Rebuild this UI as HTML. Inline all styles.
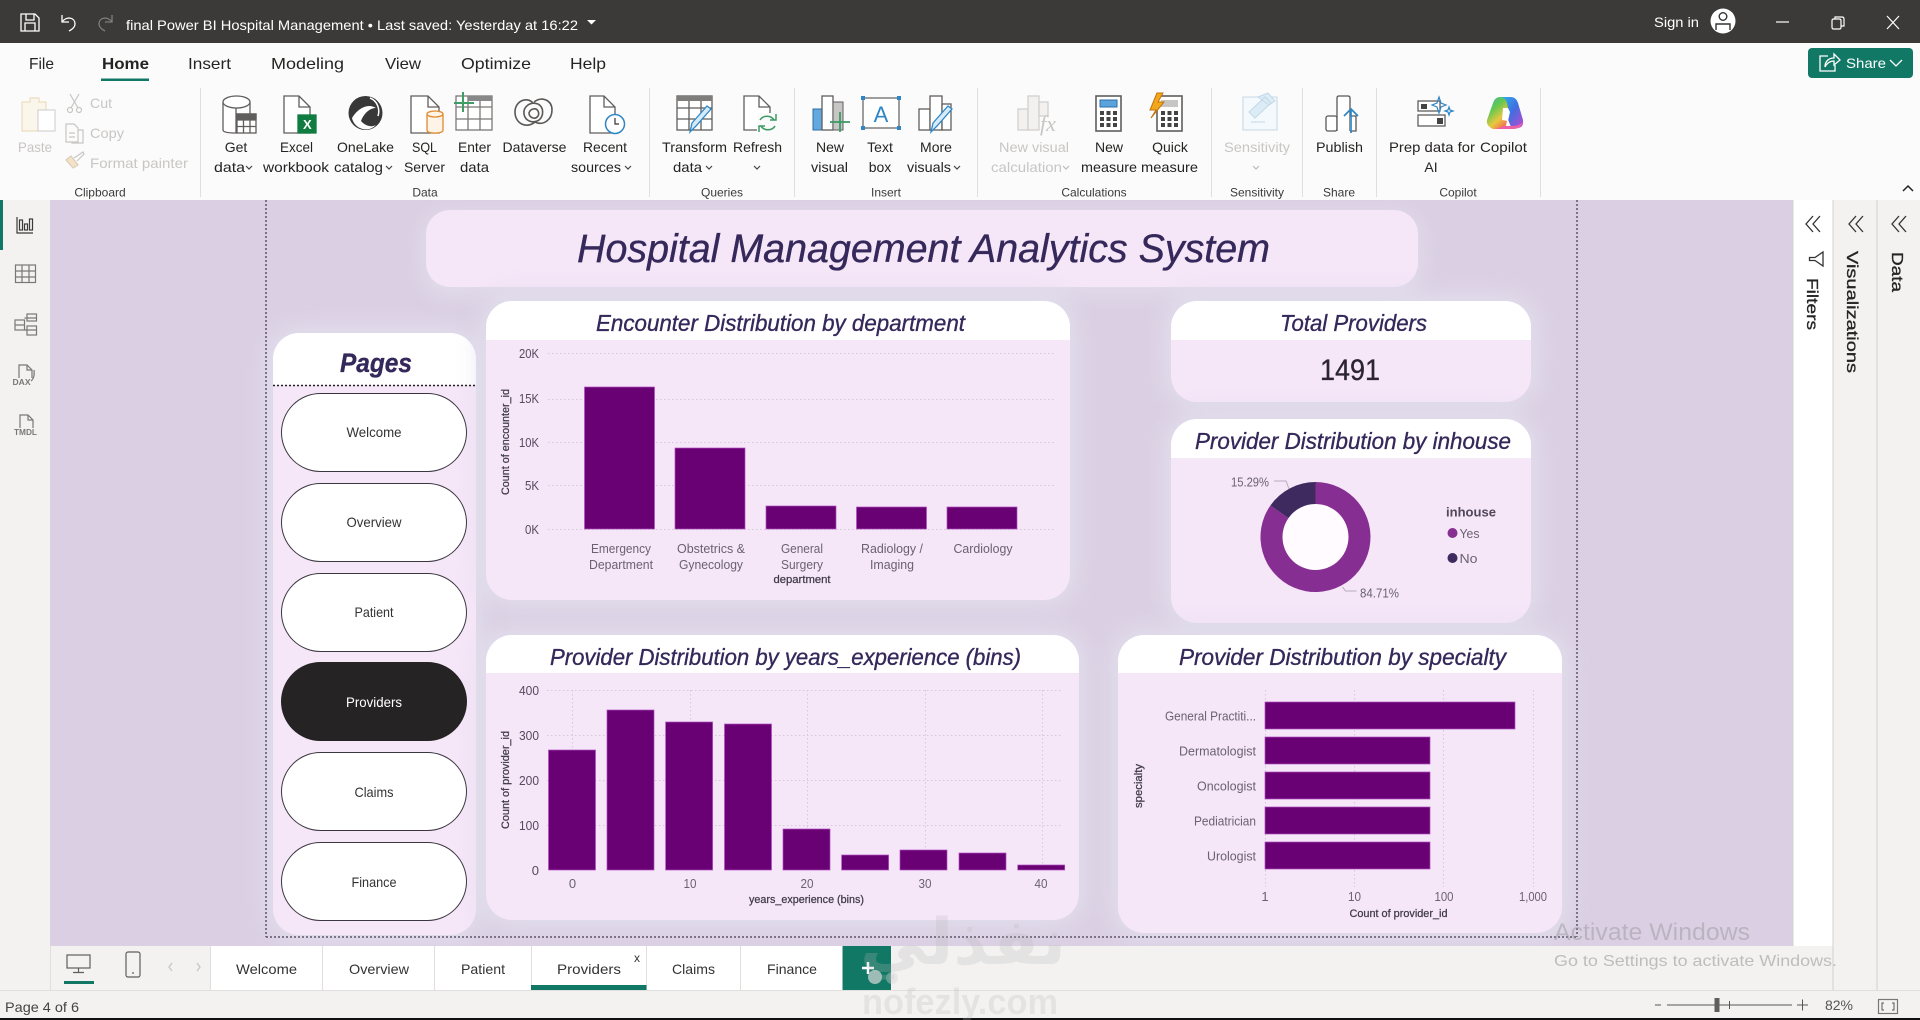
<!DOCTYPE html>
<html lang="en"><head><meta charset="utf-8"><title>final Power BI Hospital Management</title>
<style>
html,body{margin:0;padding:0;width:1920px;height:1020px;overflow:hidden;background:#f3f2f1;font-family:"Liberation Sans",sans-serif}
.abs{position:absolute}
.card{position:absolute;background:#f5e6f8;border-radius:26px;box-shadow:0 0 22px 8px rgba(226,224,238,.8);overflow:hidden}
.card i{display:block;background:#fff;position:absolute;left:0;right:0;top:0}
.pill{position:absolute;left:281px;width:186px;height:79px;border:1px solid #3b3740;border-radius:39.5px;background:#fff;box-sizing:border-box}
text{font-family:"Liberation Sans",sans-serif}
</style></head><body>
<div class="abs" style="left:50px;top:200px;width:1743px;height:746px;background:#dbd0e3"></div>
<div class="abs" style="left:426px;top:210px;width:992px;height:77px;background:#f5e6f8;border-radius:24px;box-shadow:0 6px 18px 6px rgba(226,222,236,.75)"></div>
<div class="card" style="left:273px;top:333px;width:203px;height:602px"><i style="height:52px"></i></div>
<div class="card" style="left:486px;top:301px;width:584px;height:299px"><i style="height:39px"></i></div>
<div class="card" style="left:1171px;top:301px;width:360px;height:101px"><i style="height:39px"></i></div>
<div class="card" style="left:1171px;top:419px;width:360px;height:204px"><i style="height:39px"></i></div>
<div class="card" style="left:486px;top:635px;width:593px;height:285px"><i style="height:38px"></i></div>
<div class="card" style="left:1118px;top:635px;width:444px;height:298px"><i style="height:38px"></i></div>
<div class="pill" style="top:393px"></div><div class="pill" style="top:483px"></div><div class="pill" style="top:573px"></div>
<div class="pill" style="top:662px;background:#252323;border-color:#252323"></div><div class="pill" style="top:752px"></div><div class="pill" style="top:842px"></div>

<svg class="abs" style="left:0;top:0" width="1920" height="1020" viewBox="0 0 1920 1020" xmlns="http://www.w3.org/2000/svg">
<defs>
<linearGradient id="cp1" x1="0" y1="0" x2="1" y2="1"><stop offset="0" stop-color="#2fb4ec"/><stop offset=".5" stop-color="#3f6fe0"/><stop offset="1" stop-color="#c048d0"/></linearGradient>
<linearGradient id="cp2" x1="0" y1="0" x2=".6" y2="1"><stop offset="0" stop-color="#3fb6a8"/><stop offset=".4" stop-color="#62c850"/><stop offset=".75" stop-color="#e8c840"/><stop offset="1" stop-color="#f07a4a"/></linearGradient>
</defs>

<!-- title bar -->
<rect width="1920" height="43" fill="#3b3a39"/>
<g fill="none" stroke="#fff" stroke-width="1.3">
<path d="M21 14h14l4 4v13H21z"/><path d="M26 14v6h8v-6"/><path d="M25 31v-8h10v8"/>
<path d="M62 15v7h7"/><path d="M62 22c4-6 13-5 13 2 0 3-2 5-6 7"/>
<path stroke="#7f7e7d" d="M112 15v7h-7"/><path stroke="#7f7e7d" d="M112 22c-4-6-13-5-13 2 0 3 2 5 6 7"/>
</g>
<text x="126" y="30" font-size="14" fill="#fff" textLength="452" lengthAdjust="spacingAndGlyphs">final Power BI Hospital Management  •  Last saved: Yesterday at 16:22</text>
<path d="M587 20h9l-4.500 4.500z" fill="#fff"/>
<text x="1654" y="27" font-size="14" fill="#fff" textLength="45" lengthAdjust="spacingAndGlyphs">Sign in</text>
<circle cx="1723" cy="21" r="12.500" fill="#fff"/><circle cx="1723" cy="16.500" r="3.800" fill="none" stroke="#333" stroke-width="1.400"/><path d="M1716 30v-6h14v6" fill="none" stroke="#333" stroke-width="1.400"/>
<path d="M1776 22h13" stroke="#fff" stroke-width="1.200"/>
<g fill="none" stroke="#fff" stroke-width="1.200"><rect x="1832" y="19" width="9" height="10" rx="1.500"/><path d="M1835 19v-2h7q2 0 2 2v7h-3"/><path d="M1887 16l12 13M1899 16l-12 13"/></g>

<!-- ribbon -->
<rect y="43" width="1920" height="157" fill="#fbfbfb"/>
<g font-size="16" fill="#252423">
<text x="29" y="69" textLength="25" lengthAdjust="spacingAndGlyphs">File</text>
<text x="102" y="69" font-weight="700" textLength="47" lengthAdjust="spacingAndGlyphs">Home</text>
<text x="188" y="69" textLength="43" lengthAdjust="spacingAndGlyphs">Insert</text>
<text x="271" y="69" textLength="73" lengthAdjust="spacingAndGlyphs">Modeling</text>
<text x="385" y="69" textLength="36" lengthAdjust="spacingAndGlyphs">View</text>
<text x="461" y="69" textLength="70" lengthAdjust="spacingAndGlyphs">Optimize</text>
<text x="570" y="69" textLength="36" lengthAdjust="spacingAndGlyphs">Help</text>
</g>
<rect x="101" y="78.500" width="48" height="2.500" fill="#117865"/>
<rect x="1808" y="48" width="105" height="30" rx="4" fill="#117865"/>
<g fill="none" stroke="#fff" stroke-width="1.300"><path d="M1828 56h-8v15h15v-6"/><path d="M1825 67c0-6 4-9 9-9v-4l6 6-6 5v-4c-4 0-7 2-9 6z"/><path d="M1890 60l6 6 6-6"/></g>
<text x="1846" y="68" font-size="14" fill="#fff" textLength="40" lengthAdjust="spacingAndGlyphs">Share</text>
<g stroke="#e1dfdd"><path d="M200.500 88v109M649.500 88v109M794.500 88v109M977.500 88v109M1211.500 88v109M1302.500 88v109M1376.500 88v109M1540.500 88v109"/></g>

<!-- ribbon labels -->
<g font-size="14" fill="#252423">
<text x="236" y="152" text-anchor="middle">Get</text><text x="214" y="172" textLength="31" lengthAdjust="spacingAndGlyphs">data</text>
<text x="280" y="152" textLength="33" lengthAdjust="spacingAndGlyphs">Excel</text><text x="263" y="172" textLength="66" lengthAdjust="spacingAndGlyphs">workbook</text>
<text x="337" y="152" textLength="57" lengthAdjust="spacingAndGlyphs">OneLake</text><text x="334" y="172" textLength="49" lengthAdjust="spacingAndGlyphs">catalog</text>
<text x="412" y="152" textLength="25" lengthAdjust="spacingAndGlyphs">SQL</text><text x="404" y="172" textLength="41" lengthAdjust="spacingAndGlyphs">Server</text>
<text x="458" y="152" textLength="33" lengthAdjust="spacingAndGlyphs">Enter</text><text x="460" y="172" textLength="29" lengthAdjust="spacingAndGlyphs">data</text>
<text x="502.500" y="152" textLength="64" lengthAdjust="spacingAndGlyphs">Dataverse</text>
<text x="583" y="152" textLength="44" lengthAdjust="spacingAndGlyphs">Recent</text><text x="571" y="172" textLength="50" lengthAdjust="spacingAndGlyphs">sources</text>
<text x="662" y="152" textLength="65" lengthAdjust="spacingAndGlyphs">Transform</text><text x="673" y="172" textLength="29" lengthAdjust="spacingAndGlyphs">data</text>
<text x="733" y="152" textLength="49" lengthAdjust="spacingAndGlyphs">Refresh</text>
<text x="830" y="152" text-anchor="middle">New</text><text x="811" y="172" textLength="37" lengthAdjust="spacingAndGlyphs">visual</text>
<text x="880" y="152" text-anchor="middle">Text</text><text x="880" y="172" text-anchor="middle">box</text>
<text x="936" y="152" text-anchor="middle">More</text><text x="907" y="172" textLength="44" lengthAdjust="spacingAndGlyphs">visuals</text>
<text x="1109" y="152" text-anchor="middle">New</text><text x="1081" y="172" textLength="56" lengthAdjust="spacingAndGlyphs">measure</text>
<text x="1170" y="152" text-anchor="middle">Quick</text><text x="1141" y="172" textLength="57" lengthAdjust="spacingAndGlyphs">measure</text>
<text x="1316" y="152" textLength="47" lengthAdjust="spacingAndGlyphs">Publish</text>
<text x="1389" y="152" textLength="86" lengthAdjust="spacingAndGlyphs">Prep data for</text><text x="1431" y="172" text-anchor="middle">AI</text>
<text x="1480" y="152" textLength="47" lengthAdjust="spacingAndGlyphs">Copilot</text>
</g>
<g font-size="14" fill="#c8c6c4">
<text x="18" y="152" textLength="34" lengthAdjust="spacingAndGlyphs">Paste</text>
<text x="90" y="108" textLength="22" lengthAdjust="spacingAndGlyphs">Cut</text>
<text x="90" y="138" textLength="34" lengthAdjust="spacingAndGlyphs">Copy</text>
<text x="90" y="168" textLength="98" lengthAdjust="spacingAndGlyphs">Format painter</text>
<text x="999" y="152" textLength="70" lengthAdjust="spacingAndGlyphs">New visual</text>
<text x="991" y="172" textLength="71" lengthAdjust="spacingAndGlyphs">calculation</text>
<text x="1224" y="152" textLength="66" lengthAdjust="spacingAndGlyphs">Sensitivity</text>
</g>
<g font-size="12" fill="#3b3a39" text-anchor="middle">
<text x="100" y="196.500">Clipboard</text><text x="425" y="196.500">Data</text><text x="722" y="196.500">Queries</text><text x="886" y="196.500">Insert</text><text x="1094" y="196.500">Calculations</text><text x="1257" y="196.500">Sensitivity</text><text x="1339" y="196.500">Share</text><text x="1458" y="196.500">Copilot</text>
</g>
<g fill="none" stroke="#444" stroke-width="1.200">
<path d="M246 166l3 3 3-3M386 166l3 3 3-3M625 166l3 3 3-3M706 166l3 3 3-3M754 166l3 3 3-3M954 166l3 3 3-3"/>
<path stroke="#bbb" d="M1063 166l3 3 3-3M1253 166l3 3 3-3"/>
<path stroke="#222" d="M1903 191l5-5 5 5" stroke-width="1.500"/>
</g>

<!-- ribbon icons -->
<g fill="none" stroke-width="1.200">
<path d="M22 102h8v-4h9v4h7v8h-8v21H22z" stroke="#eddcc0" fill="#fbf6ec"/>
<rect x="38" y="110" width="17" height="21" stroke="#d5d3d1" fill="#fff"/>
<g stroke="#c8c6c4"><path d="M70 94l8 14M79 94l-8 14"/><circle cx="70" cy="110" r="2.500"/><circle cx="79" cy="110" r="2.500"/>
<path d="M66 124h8l4 4v14H66z"/><path d="M78 130h5v13H72v-1"/><path d="M69 133h6M69 137h6"/></g>
<path d="M66 160l7 8 5-3-7-9z" fill="#f4e2c6" stroke="#d9cdbb"/><path d="M74 158l9-6 1 2-7 7" stroke="#c8c6c4"/>
</g>
<g fill="#fff" stroke="#605e5c" stroke-width="1.300">
<path d="M223 102v28q0 3 13 3V102"/><ellipse cx="236.500" cy="102" rx="13.500" ry="6"/><path d="M250 102v12" />
<rect x="237" y="114" width="19" height="19"/><path d="M237 120h19M237 126.500h19M243.500 120v13M250 120v13" fill="none"/>
<rect x="237" y="114" width="19" height="5" fill="#605e5c"/>
<path d="M284 96h15l11 11v26h-26z"/><path d="M299 96v11h11" fill="none"/>
<rect x="298" y="115" width="18" height="18" fill="#107c41" stroke="#107c41"/>
</g>
<text x="303" y="129" font-size="13" font-weight="700" fill="#fff">X</text>
<circle cx="365.500" cy="113" r="17" fill="#383838"/>
<path d="M352 118c6-10 16-15 24-10-6 0-12 5-15 13 3 4 10 7 15 4-9 9-22 3-24-7z" fill="#fff"/>
<path d="M370 98c8 3 10 12 8 18" fill="none" stroke="#fff" stroke-width="1.500"/>
<g fill="#fff" stroke="#605e5c" stroke-width="1.300"><path d="M411 96h17l11 11v26h-28z"/><path d="M428 96v11h11" fill="none"/></g>
<path d="M427 114v16q0 3 8 3t8-3v-16" fill="#fdf3e6" stroke="#e08a2c" stroke-width="1.300"/><ellipse cx="435" cy="114" rx="8" ry="3" fill="#fdf3e6" stroke="#e08a2c" stroke-width="1.300"/>
<g fill="#fff" stroke="#7a7876" stroke-width="1.300"><rect x="456" y="96" width="36" height="34"/><path d="M456 107h36M456 119h36M468 96v34M480 96v34" fill="none"/></g>
<rect x="468" y="96" width="24" height="5" fill="#888"/>
<path d="M463 92v20M454 103h20" stroke="#3f9d67" stroke-width="2"/>
<g fill="none" stroke="#5a5856" stroke-width="1.600"><path d="M533 103c-6-7-18-2-18 9 0 12 12 17 20 10 8 4 17-2 17-12 0-10-10-14-18-8"/><path d="M538 104c-8-3-15 3-14 10 1 7 9 10 15 6 5-4 5-13-1-16"/><path d="M529 113c1-4 7-6 9-2 2 4-1 8-5 7-3-1-4-3-4-5z"/></g>
<g fill="#fff" stroke="#605e5c" stroke-width="1.300"><path d="M590 96h14l11 11v26h-25z"/><path d="M604 96v11h11" fill="none"/></g>
<circle cx="615" cy="124" r="9.500" fill="#fff" stroke="#2f86c5" stroke-width="1.500"/><path d="M615 118v6h4" fill="none" stroke="#333" stroke-width="1.200"/>
<g fill="#fff" stroke="#605e5c" stroke-width="1.300"><rect x="677" y="96" width="35" height="34"/><path d="M677 108h35M677 119h35M689 101v29M701 101v29" fill="none"/></g>
<rect x="677" y="96" width="35" height="5" fill="#807e7c"/>
<path d="M690 132l2-9 15-17 4 3-15 17z" fill="#d6ebfa" stroke="#2f86c5" stroke-width="1.300"/>
<g fill="#fff" stroke="#605e5c" stroke-width="1.300"><path d="M744 96h15l11 11v23h-26z"/><path d="M759 96v11h11" fill="none"/></g>
<rect x="757" y="113" width="22" height="21" fill="#fbfbfb"/>
<path d="M760 120c3-5 11-5 14 0M775 126c-3 5-11 5-14 0" fill="none" stroke="#3b9a63" stroke-width="1.600"/><path d="M776 114v6h-6M759 132v-6h6" fill="none" stroke="#3b9a63" stroke-width="1.500"/>

<rect x="813" y="109" width="9" height="21" fill="#64a8e0" stroke="#2f6ea5"/><rect x="822" y="96" width="11" height="34" fill="#fff" stroke="#605e5c" stroke-width="1.300"/><rect x="833" y="102" width="10" height="28" fill="#c8c6c4" stroke="#605e5c"/>
<path d="M840 112v20M830 122h20" stroke="#3b9a63" stroke-width="1.800"/>
<rect x="863" y="98" width="36" height="30" fill="#fff" stroke="#605e5c" stroke-width="1.200"/>
<g fill="#2f86c5"><rect x="861" y="96" width="4" height="4"/><rect x="897" y="96" width="4" height="4"/><rect x="861" y="126" width="4" height="4"/><rect x="897" y="126" width="4" height="4"/></g>
<text x="881" y="122" font-size="22" text-anchor="middle" fill="#2f86c5">A</text>
<g fill="#fff" stroke="#605e5c" stroke-width="1.300"><rect x="919" y="109" width="11" height="21"/><rect x="930" y="96" width="12" height="34"/><rect x="942" y="104" width="9" height="26"/></g>
<path d="M931 132l2-9 15-17 4 3-15 17z" fill="#d6ebfa" stroke="#2f86c5" stroke-width="1.300"/>
<g fill="#f2f1f0" stroke="#d2d0ce" stroke-width="1.300"><rect x="1018" y="109" width="10" height="21"/><rect x="1028" y="96" width="11" height="34"/><rect x="1039" y="102" width="9" height="14"/></g>
<text x="1040" y="131" font-size="22" font-style="italic" fill="#c8c6c4" style="font-family:'Liberation Serif',serif">fx</text>
<rect x="1096" y="96" width="25" height="35" fill="#fff" stroke="#605e5c" stroke-width="1.600"/><rect x="1100" y="100" width="17" height="7" fill="#5aa3dd" stroke="#2f6ea5"/>
<g fill="#444"><rect x="1100" y="111" width="4" height="4"/><rect x="1106.500" y="111" width="4" height="4"/><rect x="1113" y="111" width="4" height="4"/><rect x="1100" y="117" width="4" height="4"/><rect x="1106.500" y="117" width="4" height="4"/><rect x="1113" y="117" width="4" height="4"/><rect x="1100" y="123" width="4" height="4"/><rect x="1106.500" y="123" width="4" height="4"/><rect x="1113" y="123" width="4" height="4"/></g>
<rect x="1157" y="96" width="25" height="35" fill="#fff" stroke="#605e5c" stroke-width="1.600"/><rect x="1161" y="100" width="17" height="7" fill="#c8c6c4"/>
<g fill="#444"><rect x="1161" y="111" width="4" height="4"/><rect x="1167.500" y="111" width="4" height="4"/><rect x="1174" y="111" width="4" height="4"/><rect x="1161" y="117" width="4" height="4"/><rect x="1167.500" y="117" width="4" height="4"/><rect x="1174" y="117" width="4" height="4"/><rect x="1161" y="123" width="4" height="4"/><rect x="1167.500" y="123" width="4" height="4"/><rect x="1174" y="123" width="4" height="4"/></g>
<path d="M1157 93l-7 17h6l-5 8 13-16h-6l5-9z" fill="#f2a81d" stroke="#c4720a"/>
<path d="M1243 97h34v33h-34z" fill="#f4f9fd" stroke="#cfdfea" stroke-width="1.300"/><path d="M1249 112l16-15 6 6-16 15z M1258 97l10-4 7 8-6 4z" fill="#dcecf7" stroke="#c3d8e6"/><path d="M1251 122h14" stroke="#c3d8e6"/>
<g fill="#fff" stroke="#5a5856" stroke-width="1.300"><rect x="1326" y="116" width="11" height="15" rx="2"/><path d="M1337 131v-33q0-2 2-2h9q2 0 2 2v33"/><path d="M1350 116h6v15h-6"/></g>
<path d="M1351 133v-24M1344 116l7-7 7 7" fill="none" stroke="#2f86c5" stroke-width="1.700"/>
<g fill="#fff" stroke="#605e5c" stroke-width="1.300"><rect x="1418" y="101" width="22" height="10"/><rect x="1418" y="115" width="27" height="11"/></g>
<rect x="1421" y="104" width="6" height="5" fill="#444"/><rect x="1437" y="118" width="6" height="6" fill="#444"/>
<path d="M1439 97l2 6 5 2-5 2-2 6-2-6-5-2 5-2z M1449 107l1 3 3 1-3 1-1 3-1-3-3-1 3-1z" fill="none" stroke="#2f86c5" stroke-width="1.200"/>
<path d="M1500 97h11q5 0 7 6l5 17q1 8-6 8l-6-1-4-10z" fill="url(#cp1)"/>
<path d="M1500 97q-5 0-7 6l-6 17q-1 6 6 9h12l4-16-2-10q-2-6-7-6z" fill="url(#cp2)"/>
<path d="M1496 129h17q8 0 10-7-4 4-10 4h-9z" fill="#ee5fa6"/>
<path d="M1503 108h5l2 4-2 9-6-1z" fill="#fff"/>

<!-- left rail -->
<rect x="0" y="200" width="50" height="790" fill="#f3f2f1"/>
<rect x="0" y="200" width="3" height="50" fill="#117865"/>
<g fill="none" stroke="#3b3a39" stroke-width="1.200"><path d="M17 217v16h16"/><rect x="19.500" y="220" width="3" height="10"/><rect x="24.500" y="224" width="3" height="6"/><rect x="29.500" y="219" width="3" height="11"/></g>
<g fill="none" stroke="#7a7876" stroke-width="1.200">
<rect x="15.500" y="265" width="20" height="17.500"/><path d="M15.500 271h20M15.500 277h20M22 265v17.500M29 265v17.500"/>
<rect x="27" y="314" width="9.500" height="7"/><rect x="15" y="320" width="9.500" height="10"/><rect x="27" y="326" width="9.500" height="9"/><path d="M24.500 318h2.500M24.500 330h2.500M15 325h9.500M27 330h9.500M27 318h9.500"/>
<path d="M19 378v-13h8l5 5v8"/><path d="M27 365v5h5"/><path d="M34 370q1 8-3 11"/>
<path d="M20 428v-13h8l5 5v8"/><path d="M28 415v5h5"/>
</g>
<text x="12.500" y="385" font-size="8" font-weight="700" fill="#7a7876" textLength="18" lengthAdjust="spacingAndGlyphs">DAX</text>
<text x="14" y="435" font-size="8" font-weight="700" fill="#7a7876" textLength="23" lengthAdjust="spacingAndGlyphs">TMDL</text>

<!-- right panes -->
<rect x="1793" y="200" width="40" height="746" fill="#fff"/><rect x="1833" y="200" width="44" height="790" fill="#f3f2f1"/><rect x="1877" y="200" width="43" height="790" fill="#f3f2f1"/>
<path d="M1793 200v746M1833 200v790M1877 200v790" stroke="#d2d0ce" fill="none"/>
<g fill="none" stroke="#333" stroke-width="1.300"><path d="M1813 216l-7 8 7 8M1820 216l-7 8 7 8M1856 216l-7 8 7 8M1863 216l-7 8 7 8M1899 216l-7 8 7 8M1906 216l-7 8 7 8"/><path d="M1823 252v14l-8-5.500h-5.500v-3h5.500z"/></g>
<g font-size="16" fill="#252423" stroke="#252423" stroke-width=".3">
<text transform="translate(1807 278) rotate(90)" textLength="52" lengthAdjust="spacingAndGlyphs">Filters</text>
<text transform="translate(1847 251) rotate(90)" textLength="122" lengthAdjust="spacingAndGlyphs">Visualizations</text>
<text transform="translate(1892 252) rotate(90)" textLength="40" lengthAdjust="spacingAndGlyphs">Data</text>
</g>

<!-- page dotted border -->
<g fill="none" stroke="#5c5468" stroke-width="1.500" stroke-dasharray="2 2"><path d="M266 200v737M1577 200v737M266 937h1311"/></g>

<!-- main titles -->
<g fill="#35285a" font-style="italic" stroke="#35285a" stroke-width=".35">
<text x="577" y="262" font-size="40" textLength="693" lengthAdjust="spacingAndGlyphs">Hospital Management Analytics System</text>
<text x="596" y="331" font-size="23" textLength="369" lengthAdjust="spacingAndGlyphs">Encounter Distribution by department</text>
<text x="1280" y="331" font-size="23" textLength="147" lengthAdjust="spacingAndGlyphs">Total Providers</text>
<text x="1195" y="449" font-size="23" textLength="316" lengthAdjust="spacingAndGlyphs">Provider Distribution by inhouse</text>
<text x="550" y="665" font-size="23" textLength="471" lengthAdjust="spacingAndGlyphs">Provider Distribution by years_experience (bins)</text>
<text x="1179" y="665" font-size="23" textLength="327" lengthAdjust="spacingAndGlyphs">Provider Distribution by specialty</text>
<text x="340" y="372" font-size="27" font-weight="700" textLength="72" lengthAdjust="spacingAndGlyphs">Pages</text>
</g>
<path d="M273 385.500h203" stroke="#222" stroke-width="1.500" stroke-dasharray="2 2"/>
<text x="1350" y="380" text-anchor="middle" font-size="30" fill="#2b2433" stroke="#2b2433" stroke-width=".3" textLength="60" lengthAdjust="spacingAndGlyphs">1491</text>

<!-- pills text -->
<g font-size="14" fill="#333" text-anchor="middle">
<text x="374" y="437" textLength="55" lengthAdjust="spacingAndGlyphs">Welcome</text>
<text x="374" y="527" textLength="55" lengthAdjust="spacingAndGlyphs">Overview</text>
<text x="374" y="617" textLength="39" lengthAdjust="spacingAndGlyphs">Patient</text>
<text x="374" y="707" fill="#fff" textLength="56" lengthAdjust="spacingAndGlyphs">Providers</text>
<text x="374" y="797" textLength="39" lengthAdjust="spacingAndGlyphs">Claims</text>
<text x="374" y="887" textLength="45" lengthAdjust="spacingAndGlyphs">Finance</text>
</g>

<!-- encounter chart -->
<g stroke="#d4c8da" stroke-dasharray="1.500 2.500" fill="none"><path d="M548 353.500h507M548 399.500h507M548 442.500h507M548 485.500h507M548 529.500h507"/></g>
<g fill="#690073" stroke="#b050c2" stroke-width=".7">
<rect x="584.500" y="387" width="70" height="142"/><rect x="675" y="448" width="70" height="81"/><rect x="766" y="506" width="70" height="23"/><rect x="856.500" y="507" width="70" height="22"/><rect x="947" y="507" width="70" height="22"/>
</g>
<g font-size="13" fill="#554b60" text-anchor="end">
<text x="539" y="358" textLength="20" lengthAdjust="spacingAndGlyphs">20K</text><text x="539" y="403" textLength="20" lengthAdjust="spacingAndGlyphs">15K</text><text x="539" y="447" textLength="20" lengthAdjust="spacingAndGlyphs">10K</text><text x="539" y="490" textLength="14" lengthAdjust="spacingAndGlyphs">5K</text><text x="539" y="534" textLength="14" lengthAdjust="spacingAndGlyphs">0K</text>
</g>
<g font-size="12.500" fill="#6a6272" text-anchor="middle">
<text x="621" y="553" textLength="60" lengthAdjust="spacingAndGlyphs">Emergency</text><text x="621" y="569" textLength="64" lengthAdjust="spacingAndGlyphs">Department</text>
<text x="711" y="553" textLength="68" lengthAdjust="spacingAndGlyphs">Obstetrics &amp;</text><text x="711" y="569" textLength="64" lengthAdjust="spacingAndGlyphs">Gynecology</text>
<text x="802" y="553" textLength="42" lengthAdjust="spacingAndGlyphs">General</text><text x="802" y="569" textLength="42" lengthAdjust="spacingAndGlyphs">Surgery</text>
<text x="892" y="553" textLength="62" lengthAdjust="spacingAndGlyphs">Radiology /</text><text x="892" y="569" textLength="44" lengthAdjust="spacingAndGlyphs">Imaging</text>
<text x="983" y="553" textLength="59" lengthAdjust="spacingAndGlyphs">Cardiology</text>
</g>
<g font-size="11" fill="#3f3a48" stroke="#3f3a48" stroke-width=".25" text-anchor="middle">
<text x="802" y="583" textLength="57" lengthAdjust="spacingAndGlyphs">department</text>
<text transform="translate(509 442) rotate(-90)" textLength="106" lengthAdjust="spacingAndGlyphs">Count of encounter_id</text>
<text transform="translate(509 780) rotate(-90)" textLength="98" lengthAdjust="spacingAndGlyphs">Count of provider_id</text>
<text x="806.500" y="903" textLength="115" lengthAdjust="spacingAndGlyphs">years_experience (bins)</text>
<text x="1398.500" y="917" textLength="98" lengthAdjust="spacingAndGlyphs">Count of provider_id</text>
<text transform="translate(1142 786) rotate(-90)" textLength="44" lengthAdjust="spacingAndGlyphs">specialty</text>
</g>

<!-- years chart -->
<g stroke="#d4c8da" stroke-dasharray="1.500 2.500" fill="none"><path d="M547 690.500h514M547 735.500h514M547 780.500h514M547 825.500h514"/><path d="M572.500 690v180M690.500 690v180M807.500 690v180M925.500 690v180M1042.500 690v180"/></g>
<g fill="#690073" stroke="#b050c2" stroke-width=".7">
<rect x="548.500" y="750" width="47" height="120"/><rect x="607" y="710" width="47" height="160"/><rect x="665.600" y="722" width="47" height="148"/><rect x="724.500" y="724" width="47" height="146"/><rect x="783" y="829" width="47" height="41"/><rect x="841.600" y="855" width="47" height="15"/><rect x="900" y="850" width="47" height="20"/><rect x="959" y="853" width="47" height="17"/><rect x="1017.700" y="865" width="47" height="5"/>
</g>
<g font-size="13" fill="#554b60" text-anchor="end">
<text x="539" y="695" textLength="20" lengthAdjust="spacingAndGlyphs">400</text><text x="539" y="740" textLength="20" lengthAdjust="spacingAndGlyphs">300</text><text x="539" y="785" textLength="20" lengthAdjust="spacingAndGlyphs">200</text><text x="539" y="830" textLength="20" lengthAdjust="spacingAndGlyphs">100</text><text x="539" y="875">0</text>
</g>
<g font-size="13" fill="#6a6272" text-anchor="middle">
<text x="572.500" y="888">0</text><text x="690" y="888" textLength="13" lengthAdjust="spacingAndGlyphs">10</text><text x="807" y="888" textLength="13" lengthAdjust="spacingAndGlyphs">20</text><text x="925" y="888" textLength="13" lengthAdjust="spacingAndGlyphs">30</text><text x="1041" y="888" textLength="13" lengthAdjust="spacingAndGlyphs">40</text>
</g>

<!-- donut -->
<circle cx="1315.500" cy="537" r="34" fill="#fffbff"/>
<path d="M1315.500 482A55 55 0 1 1 1270.400 505.500L1288.450 518.100A33 33 0 1 0 1315.500 504Z" fill="#872e92"/>
<path d="M1315.500 482A55 55 0 0 0 1270.400 505.500L1288.450 518.100A33 33 0 0 1 1315.500 504Z" fill="#3e2a5f"/>
<path d="M1274 481h12l3 8M1342.500 587l3 4h11" fill="none" stroke="#b5adba"/>
<g font-size="12.500" fill="#6a6272">
<text x="1231" y="486.500" textLength="38" lengthAdjust="spacingAndGlyphs">15.29%</text>
<text x="1360" y="597.500" textLength="39" lengthAdjust="spacingAndGlyphs">84.71%</text>
<text x="1459.500" y="538" font-size="13" textLength="20" lengthAdjust="spacingAndGlyphs">Yes</text>
<text x="1459.500" y="563" font-size="13" textLength="18" lengthAdjust="spacingAndGlyphs">No</text>
</g>
<text x="1446" y="516.500" font-size="13" font-weight="700" fill="#50475a" textLength="50" lengthAdjust="spacingAndGlyphs">inhouse</text>
<circle cx="1452.500" cy="533" r="5" fill="#872e92"/><circle cx="1452.500" cy="558" r="5" fill="#3e2a5f"/>

<!-- specialty chart -->
<g stroke="#d4c8da" stroke-dasharray="1.500 2.500" fill="none"><path d="M1265.500 690v197M1354.500 690v197M1443.500 690v197M1533.500 690v197"/></g>
<g fill="#690073" stroke="#b050c2" stroke-width=".7">
<rect x="1265" y="702" width="250" height="27"/><rect x="1265" y="737" width="165" height="27"/><rect x="1265" y="772" width="165" height="27"/><rect x="1265" y="807" width="165" height="27"/><rect x="1265" y="842" width="165" height="27"/>
</g>
<g font-size="13" fill="#6a6272" text-anchor="end">
<text x="1256" y="720.500" textLength="91" lengthAdjust="spacingAndGlyphs">General Practiti...</text><text x="1256" y="755.500" textLength="77" lengthAdjust="spacingAndGlyphs">Dermatologist</text><text x="1256" y="790.500" textLength="59" lengthAdjust="spacingAndGlyphs">Oncologist</text><text x="1256" y="825.500" textLength="62" lengthAdjust="spacingAndGlyphs">Pediatrician</text><text x="1256" y="860.500" textLength="49" lengthAdjust="spacingAndGlyphs">Urologist</text>
</g>
<g font-size="13" fill="#6a6272" text-anchor="middle">
<text x="1265" y="901">1</text><text x="1354.500" y="901" textLength="13" lengthAdjust="spacingAndGlyphs">10</text><text x="1444" y="901" textLength="19" lengthAdjust="spacingAndGlyphs">100</text><text x="1533" y="901" textLength="28" lengthAdjust="spacingAndGlyphs">1,000</text>
</g>

<!-- bottom tab strip -->
<rect x="50" y="946" width="1743" height="44" fill="#f3f2f1"/>
<rect x="210.500" y="946" width="632" height="44" fill="#fff"/>
<path d="M210.500 946v44M322.500 946v44M434.500 946v44M531.500 946v44M646.500 946v44M740.500 946v44M50.500 946v44" stroke="#e1dfdd"/>
<rect x="531" y="985" width="115.500" height="5" fill="#117865"/>
<rect x="842.500" y="946" width="48.500" height="44" fill="#117865"/>
<path d="M868 962v12M862 968h12" stroke="#fff" stroke-width="2.500"/>
<g fill="none" stroke="#605e5c" stroke-width="1.200"><rect x="67" y="955" width="23" height="13"/><path d="M78.500 968v4M73 972.500h11"/><rect x="126" y="952" width="14" height="25" rx="2"/><path d="M132 973h2"/></g>
<rect x="64" y="981" width="30" height="3" fill="#117865"/>
<path d="M172 963l-3 4 3 4M197 963l3 4-3 4" fill="none" stroke="#c8c6c4" stroke-width="1.300"/>
<g font-size="14" fill="#333">
<text x="236" y="974" textLength="61" lengthAdjust="spacingAndGlyphs">Welcome</text><text x="349" y="974" textLength="60" lengthAdjust="spacingAndGlyphs">Overview</text><text x="461" y="974" textLength="44" lengthAdjust="spacingAndGlyphs">Patient</text><text x="557" y="974" textLength="64" lengthAdjust="spacingAndGlyphs">Providers</text><text x="672" y="974" textLength="43" lengthAdjust="spacingAndGlyphs">Claims</text><text x="767" y="974" textLength="50" lengthAdjust="spacingAndGlyphs">Finance</text>
<text x="634" y="962" font-size="12">x</text>
</g>

<!-- status bar -->
<rect y="990" width="1920" height="28" fill="#f3f2f1"/>
<path d="M0 990.500h1920" stroke="#e1dfdd"/>
<rect y="1018" width="1920" height="2" fill="#111"/>
<text x="5" y="1012" font-size="14" fill="#444" textLength="74" lengthAdjust="spacingAndGlyphs">Page 4 of 6</text>
<path d="M1655 1005h6M1667 1005h125M1729.500 1001v8M1797 1005h11M1802.500 999.500v11" stroke="#555" fill="none"/>
<rect x="1714.500" y="998" width="5" height="14" fill="#605e5c"/>
<text x="1825" y="1010" font-size="14" fill="#555" textLength="28" lengthAdjust="spacingAndGlyphs">82%</text>
<rect x="1878.500" y="999.500" width="19" height="14" fill="#f3f2f1" stroke="#777" stroke-width="1.200"/>
<path d="M1884 1003h-2v7h2M1892 1003h2v7h-2" fill="none" stroke="#555"/>

<!-- overlays -->
<text x="1554" y="940" font-size="24" fill="#9a9aa0" opacity=".5" textLength="196" lengthAdjust="spacingAndGlyphs">Activate Windows</text>
<text x="1554" y="966" font-size="16" fill="#9a9a9a" opacity=".6" textLength="283" lengthAdjust="spacingAndGlyphs">Go to Settings to activate Windows.</text>
<g fill="#b8b8b8" opacity=".24" font-weight="700">
<text x="862" y="1014" font-size="36" textLength="196" lengthAdjust="spacingAndGlyphs">nofezly.com</text>
<text x="860" y="964" font-size="64" textLength="206" lengthAdjust="spacingAndGlyphs" style="font-family:'DejaVu Sans',sans-serif">نفذلي</text>
</g>
<circle cx="875" cy="977" r="7" fill="#d8d8d8" opacity=".7"/><circle cx="892" cy="978" r="6" fill="#d8d8d8" opacity=".4"/>
</svg>
</body></html>
